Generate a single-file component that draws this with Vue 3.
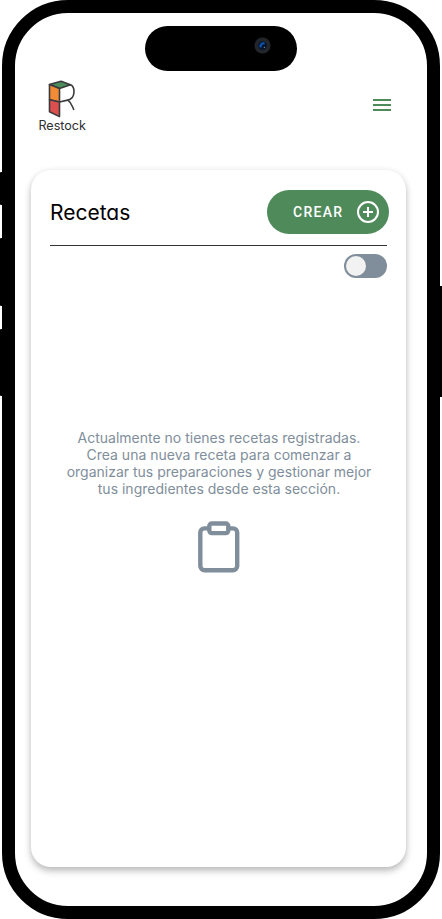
<script setup>
import { ref } from 'vue'

const enabled = ref(false)
</script>

<template>
  <div class="device">
    <span class="side mute"></span>
    <span class="side vol-up"></span>
    <span class="side vol-down"></span>
    <span class="side power"></span>
    <div class="frame">
      <div class="island"><span class="lens"><svg viewBox="0 0 18 18"><circle cx="9" cy="9" r="8.5" fill="#22252a" /><circle cx="9" cy="9" r="4.6" fill="#07152c" /><path d="M7.2 11A3 3 0 0 1 11.2 7" fill="none" stroke="#0b56b5" stroke-width="2.2" /><circle cx="11" cy="11" r=".7" fill="#72899a" /></svg></span></div>
      <header class="topbar">
        <div class="brand">
          <svg class="mark" viewBox="0 0 28 38" fill="none" stroke="#3b3b3d" stroke-width="1.6" stroke-linejoin="round" stroke-linecap="round">
            <path d="M1.5 4.5 13 1.2 22.5 4.8 11.5 8.6Z" fill="#4c8c5b" />
            <path d="M1.5 4.5 11.5 8.6V22L1.5 19.7Z" fill="#f18b35" />
            <path d="M1.5 19.7 11.5 22V36.6L1.5 31.8Z" fill="#dc4f4f" />
            <path d="M22.5 4.8C25.3 6 26 8 26 11.5C26 17.5 22.3 20 18.5 20.4L11.5 22M20 20.4C23.5 22.6 24 26 25.7 29.3" />
          </svg>
          <span class="brand-name">Restock</span>
        </div>
        <button class="menu" aria-label="Menú"><i></i><i></i><i></i></button>
      </header>
      <main class="card">
        <div class="card-head">
          <h1>Recetas</h1>
          <button class="create">
            <span>CREAR</span>
            <svg viewBox="0 0 22 22" fill="none" stroke="#fff" stroke-width="2"><circle cx="11" cy="11" r="10" /><path d="M11 6v10M6 11h10" /></svg>
          </button>
        </div>
        <div class="filter">
          <button class="switch" :class="{ on: enabled }" role="switch" :aria-checked="enabled" @click="enabled = !enabled"><span></span></button>
        </div>
        <section class="empty">
          <p>Actualmente no tienes recetas registradas.<br>Crea una nueva receta para comenzar a<br>organizar tus preparaciones y gestionar mejor<br>tus ingredientes desde esta sección.</p>
          <svg viewBox="0 0 42 52" fill="none" stroke="#808e9b" stroke-width="4.4"><path d="M11 7.4H6.5A4.2 4.2 0 0 0 2.3 11.6V45A4.2 4.2 0 0 0 6.5 49.2H35A4.2 4.2 0 0 0 39.2 45V11.6A4.2 4.2 0 0 0 35 7.4H31" /><rect x="11.3" y="2.5" width="19" height="9.6" rx="2.6" /></svg>
        </section>
      </main>
    </div>
  </div>
</template>

<style>
body { background: #fff; }
</style>

<style scoped>
* { box-sizing: border-box; }
button { border: 0; padding: 0; }
.device { position: relative; width: 442px; height: 919px; padding: 0 2.2px; overflow: hidden; background: #fff; }
.frame { position: relative; height: 919px; border: 13px solid #000; border-radius: 66px; background: #fff; }
.side { position: absolute; left: 0; width: 6px; background: #000; border-radius: 1px 0 0 1px; }
.mute { top: 171.5px; height: 33px; }
.vol-up { top: 238px; height: 67.5px; }
.vol-down { top: 328.5px; height: 67.5px; }
.power { left: auto; right: 0; top: 286px; height: 111px; }
.island { position: absolute; left: 129.8px; top: 13px; width: 152px; height: 45px; border-radius: 23px; background: #000; }
.lens { position: absolute; left: 109px; top: 11px; width: 17px; height: 17px; }
.lens svg { display: block; width: 17px; height: 17px; }
.topbar { display: flex; justify-content: space-between; align-items: flex-start; height: 157px; padding: 67px 36px 0 22px; }
.brand { display: flex; flex-direction: column; align-items: center; width: 50px; }
.mark { width: 28px; height: 38px; }
.brand-name { margin-top: 1px; font: 400 12.6px/14px Inter, sans-serif; color: #2f2f31; }
.menu { display: flex; flex-direction: column; gap: 3px; width: 18px; margin-top: 19px; background: none; }
.menu i { height: 2px; background: #4f8a5b; }
.card { width: 375px; height: 697px; margin-left: 15.8px; padding: 20px 17px 0 19px; border-radius: 20px; background: #fff; box-shadow: 0 4px 7px rgba(0,0,0,.25), 0 0 7px rgba(0,0,0,.05); }
.card-head { display: flex; align-items: flex-start; justify-content: space-between; height: 56px; margin-right: 2px; border-bottom: 1px solid #343437; }
h1 { margin: 8px 0 0; font: 400 21px/30px Inter, sans-serif; font-feature-settings: "cv11"; color: #000; }
.create { display: flex; flex: none; align-items: center; justify-content: space-between; width: 122px; height: 44px; margin-right: -2px; padding: 0 10px 0 26px; border-radius: 22px; background: #4f8a5b; color: #fff; font: 500 14px/16px Roboto, sans-serif; letter-spacing: 1.3px; }
.create svg { width: 22px; height: 22px; }
.filter { display: flex; justify-content: flex-end; padding: 8px 2px 0 0; }
.switch { display: flex; align-items: center; width: 43px; height: 24px; padding: 2px; border-radius: 12px; background: #808e9b; }
.switch span { width: 20px; height: 20px; border-radius: 50%; background: #f2f2f2; }
.switch.on { justify-content: flex-end; }
.empty { display: flex; flex-direction: column; align-items: center; margin: 151px 0 0 -1px; }
.empty p { margin: 0; font: 400 14px/17px Inter, sans-serif; text-align: center; white-space: nowrap; color: #808e9b; }
.empty svg { width: 42px; height: 52px; margin-top: 23.5px; }
</style>
